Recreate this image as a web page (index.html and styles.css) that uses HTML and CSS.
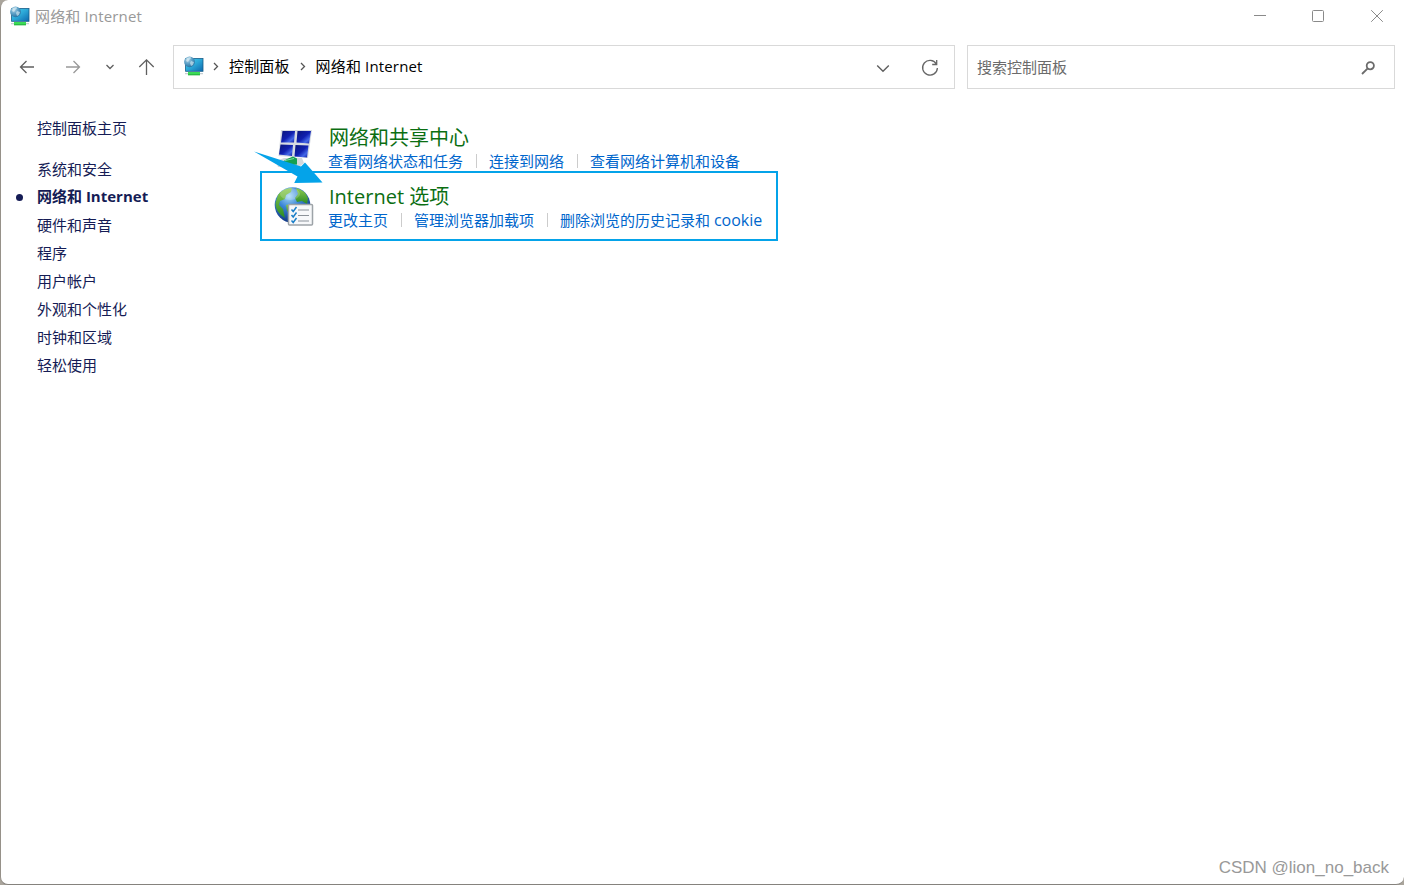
FILE: index.html
```html
<!DOCTYPE html>
<html lang="zh-CN">
<head>
  <meta charset="UTF-8" />
  <meta name="viewport" content="width=device-width, initial-scale=1.0"/>
  <title>网络和 Internet</title>
  <link rel="stylesheet" href="styles.css">
</head>
<body>
  <!-- shared gradients and the monitor icon -->
  <svg class="defs" width="0" height="0">
    <defs>
      <linearGradient id="screen" x1="0" y1="0" x2="1" y2="1">
        <stop offset="0" stop-color="#48d8f4"/>
        <stop offset="0.5" stop-color="#2ba6d6"/>
        <stop offset="1" stop-color="#0d68ae"/>
      </linearGradient>
      <radialGradient id="ball" cx="0.35" cy="0.3" r="0.75">
        <stop offset="0" stop-color="#b5d5e6"/>
        <stop offset="0.5" stop-color="#5da0c6"/>
        <stop offset="1" stop-color="#256f9f"/>
      </radialGradient>
      <radialGradient id="globe" cx="0.4" cy="0.25" r="0.8">
        <stop offset="0" stop-color="#a9dcf8"/>
        <stop offset="0.4" stop-color="#3b86d6"/>
        <stop offset="1" stop-color="#0a2a78"/>
      </radialGradient>
      <linearGradient id="land" x1="0" y1="0" x2="0" y2="1">
        <stop offset="0" stop-color="#8fcc50"/>
        <stop offset="1" stop-color="#278a25"/>
      </linearGradient>
      <linearGradient id="pane" x1="0" y1="0" x2="1" y2="1">
        <stop offset="0" stop-color="#0a1578"/>
        <stop offset="0.5" stop-color="#1020b0"/>
        <stop offset="0.75" stop-color="#4468e8"/>
        <stop offset="1" stop-color="#0c189a"/>
      </linearGradient>
      <symbol id="network" viewBox="0 0 20 20">
        <rect x="1.600" y="2.500" width="17.400" height="12.800" fill="url(#screen)" stroke="#175d88" stroke-width="0.8"/>
        <rect x="1" y="17.200" width="18" height="1" fill="#b9c4c8"/>
        <rect x="4" y="16" width="12" height="3.200" fill="#3bdb55"/>
        <rect x="4" y="18.400" width="12" height="0.8" fill="#21a63a"/>
        <circle cx="5.500" cy="5.800" r="5.400" fill="url(#ball)"/>
        <path d="M3 2l3-1 1.500 1-2 1.500-1.500 2.500-2-1zM7 5l3 1-1 3-2 1-1-3z" fill="#e3f3f8" opacity="0.6"/>
      </symbol>
    </defs>
  </svg>

  <div class="window">
    <div class="titlebar">
      <svg class="net-icon"><use href="#network"/></svg>
      <span class="title">网络和 Internet</span>
      <div class="controls">
        <svg width="14" height="14" viewBox="0 0 14 14"><path d="M2 7.500h12"/></svg>
        <svg width="14" height="14" viewBox="0 0 14 14"><rect x="1.500" y="2.500" width="11" height="11" rx="1"/></svg>
        <svg width="14" height="14" viewBox="0 0 14 14"><path d="M1.200 2.200l11.600 11.600M12.800 2.200L1.200 13.800"/></svg>
      </div>
    </div>

    <div class="toolbar">
      <div class="nav">
        <svg class="back" width="16" height="16" viewBox="0 0 16 16"><path d="M15 8H1.500M7.500 2L1.500 8l6 6"/></svg>
        <svg class="forward" width="16" height="16" viewBox="0 0 16 16"><path d="M1 8h13.500M8.500 2l6 6-6 6"/></svg>
        <svg class="recent" width="10" height="8" viewBox="0 0 10 8"><path d="M1.500 2L5 5.500 8.500 2"/></svg>
        <svg class="up" width="18" height="18" viewBox="0 0 18 18"><path d="M9.500 17V1.800M2.300 9l7.200-7.200L16.700 9"/></svg>
      </div>

      <div class="address">
        <svg class="net-icon"><use href="#network"/></svg>
        <svg class="sep" width="6" height="9" viewBox="0 0 6 9"><path d="M1 1l3.500 3.500L1 8"/></svg>
        <span>控制面板</span>
        <svg class="sep wide" width="6" height="9" viewBox="0 0 6 9"><path d="M1 1l3.500 3.500L1 8"/></svg>
        <span>网络和 Internet</span>
        <svg class="drop" width="14" height="9" viewBox="0 0 14 9"><path d="M1.200 1.500L7 7.200l5.800-5.700"/></svg>
        <svg class="refresh" width="18" height="18" viewBox="0 0 18 18"><path d="M15.300 4.800A7.400 7.400 0 1 0 16.400 9M15.700 1v4.500h-4.500"/></svg>
      </div>

      <div class="search">
        <span>搜索控制面板</span>
        <svg width="14" height="14" viewBox="0 0 14 14"><circle cx="9.300" cy="4.700" r="3.600"/><path d="M6.700 7.300L1 13"/></svg>
      </div>
    </div>

    <div class="content">
      <div class="sidebar">
        <a class="home">控制面板主页</a>
        <a>系统和安全</a>
        <a class="active">网络和 Internet</a>
        <a>硬件和声音</a>
        <a>程序</a>
        <a>用户帐户</a>
        <a>外观和个性化</a>
        <a>时钟和区域</a>
        <a>轻松使用</a>
      </div>

      <div class="main">
        <div class="category">
          <svg class="cat-icon" width="40" height="42" viewBox="0 0 40 42">
            <path d="M7 3h31l-4 28-29.500-2z" fill="#d6dbe2"/>
            <path d="M8.500 4H21l-1 11.500H7z" fill="url(#pane)"/>
            <path d="M23.500 4H37l-2 12.500-12.500-1z" fill="url(#pane)"/>
            <path d="M6.500 17.500l12.500 0.500-1 11-13-1.500z" fill="url(#pane)"/>
            <path d="M21.500 18l13 0.500L33 30.500l-12.500-1z" fill="url(#pane)"/>
            <path d="M2 34l8-3h18l2 5-5 4H4z" fill="#d3d8dc"/>
            <path d="M8 35l5-3 6-2.500 4 2v6l-9 1z" fill="#16a050"/>
            <path d="M11 33.500l9-2" stroke="#7fdca0"/>
          </svg>
          <div class="info">
            <a class="heading">网络和共享中心</a>
            <div class="links">
              <a>查看网络状态和任务</a>
              <a>连接到网络</a>
              <a>查看网络计算机和设备</a>
            </div>
          </div>
        </div>

        <div class="category">
          <svg class="cat-icon" width="40" height="42" viewBox="0 0 40 42">
            <circle cx="18.500" cy="19" r="17.800" fill="url(#globe)"/>
            <path d="M4 9Q9 2 18 2l-1 4-5 3-1 4-5 2-1 4 4 4 2 9Q1 26 1.500 17z" fill="url(#land)"/>
            <path d="M22 2q9 2 12 10l-1 6-5-3-5 1-2-4 3-4z" fill="url(#land)"/>
            <path d="M12 19l6-1 3 4-4 6-4-3z" fill="url(#land)"/>
            <ellipse cx="16" cy="8" rx="10" ry="6" fill="#fff" opacity="0.2"/>
            <rect x="14.500" y="18.500" width="24" height="20.500" rx="1" fill="#f7f8fa" stroke="#9da3a8" stroke-width="1.500"/>
            <path d="M24 24h11M24 29.500h11M24 35h11" stroke="#8c9299" stroke-width="1.100"/>
            <path d="M17.500 23.500l1.700 2 3.300-4.500M17.500 29l1.700 2 3.300-4.500M17.500 34.500l1.700 2 3.300-4.500" fill="none" stroke="#1c7fc8" stroke-width="1.500"/>
          </svg>
          <div class="info">
            <a class="heading">Internet 选项</a>
            <div class="links">
              <a>更改主页</a>
              <a>管理浏览器加载项</a>
              <a>删除浏览的历史记录和&nbsp;<span class="latin">cookie</span></a>
            </div>
          </div>
        </div>

        <!-- annotation over the second category -->
        <div class="highlight"></div>
        <svg class="arrow" width="70" height="36" viewBox="0 0 70 36">
          <path d="M0 0.500L47 15.500 51 11.500 68.500 31.500 40.200 32 43.500 25.500z" fill="#04a3e9"/>
        </svg>
      </div>
    </div>

    <div class="watermark">CSDN @lion_no_back</div>
  </div>
</body>
</html>
```
FILE: styles.css
```css
* {
  box-sizing: border-box;
}

body {
  margin: 0;
  height: 885px;
  background: #aaa59c;
  font-family: "Open Sans", "Noto Sans CJK SC", sans-serif;
  font-size: 15px;
  overflow: hidden;
}

svg {
  display: block;
  flex: none;
  fill: none;
}

.defs {
  position: absolute;
}

.window {
  position: relative;
  height: 885px;
  background: #fff;
  border-left: 1px solid #969189;
  border-bottom: 1px solid #85827d;
  border-radius: 8px;
  border-top-right-radius: 0;
}

/* title bar */
.titlebar {
  display: flex;
  align-items: center;
  height: 30px;
  padding: 0 20px 0 9px;
}

.net-icon {
  width: 20px;
  height: 20px;
}

.titlebar .net-icon {
  margin-top: 2px;
}

.title {
  margin-left: 5px;
  color: #999;
  letter-spacing: 0.15px;
}

.controls {
  display: flex;
  gap: 45px;
  margin-left: auto;
  stroke: #8a8a8a;
}

/* toolbar */
.toolbar {
  display: flex;
  height: 44px;
  margin-top: 15px;
  padding-right: 9px;
}

.nav {
  display: flex;
  align-items: center;
  width: 172px;
  padding-left: 18px;
  stroke: #5f5f5f;
  stroke-width: 1.3;
}

.forward {
  margin-left: 30px;
  stroke: #999;
}

.recent {
  margin: 0 0 1px 24px;
}

.up {
  margin-left: 22px;
}

.address, .search {
  display: flex;
  align-items: center;
  border: 1px solid #d9d9d9;
}

.address {
  width: 782px;
  padding: 0 15px 2px 10px;
}

.address span {
  margin-top: -1px;
  letter-spacing: 0.15px;
}

.sep {
  margin: 1px 10px 0 9px;
  stroke: #555;
  stroke-width: 1.3;
}

.sep.wide {
  margin-left: 10px;
}

.drop {
  margin: 4px 31px 0 auto;
  stroke: #5f5f5f;
  stroke-width: 1.4;
}

.refresh {
  margin-top: 3px;
  stroke: #666;
  stroke-width: 1.3;
}

.search {
  flex: 1;
  justify-content: space-between;
  margin-left: 12px;
  padding: 0 19px 1px 9px;
  color: #6b6b6b;
}

.search svg {
  margin-top: 2px;
  stroke: #6b6b6b;
  stroke-width: 1.8;
}

/* content */
.content {
  display: flex;
}

.sidebar {
  width: 259px;
  padding: 25px 0 0 36px;
}

.sidebar a {
  display: block;
  height: 28px;
  line-height: 28px;
  color: #151c55;
}

.sidebar .home {
  margin-bottom: 13px;
}

.sidebar .active {
  position: relative;
  line-height: 26px;
  font-weight: bold;
}

.sidebar .active::before {
  content: "";
  position: absolute;
  left: -21px;
  top: 11px;
  width: 7px;
  height: 7px;
  border-radius: 50%;
  background: #151c55;
}

.main {
  position: relative;
  padding: 35px 0 0 14px;
}

.category {
  display: flex;
  height: 59px;
}

.cat-icon {
  margin-top: 3px;
}

.info {
  margin-left: 14px;
}

.heading {
  display: block;
  height: 26px;
  padding-left: 1px;
  line-height: 28px;
  font-size: 20px;
  color: #0b6e12;
}

.links {
  display: flex;
  align-items: center;
  height: 22px;
  color: #0066cc;
  line-height: 22px;
}

.links a + a {
  display: flex;
  align-items: center;
}

.links a + a::before {
  content: "";
  width: 1px;
  height: 14px;
  margin: 0 12px 0 13px;
  background: #ccc;
}

.latin {
  font-size: 16px;
}

.highlight {
  position: absolute;
  left: 0;
  top: 82px;
  width: 518px;
  height: 70px;
  border: 2px solid #04a3e9;
}

.arrow {
  position: absolute;
  left: -6px;
  top: 62px;
}

.watermark {
  position: absolute;
  right: 15px;
  bottom: 5px;
  font-family: "Liberation Sans", Arial, sans-serif;
  font-size: 17px;
  line-height: 22px;
  color: #999;
}
```
